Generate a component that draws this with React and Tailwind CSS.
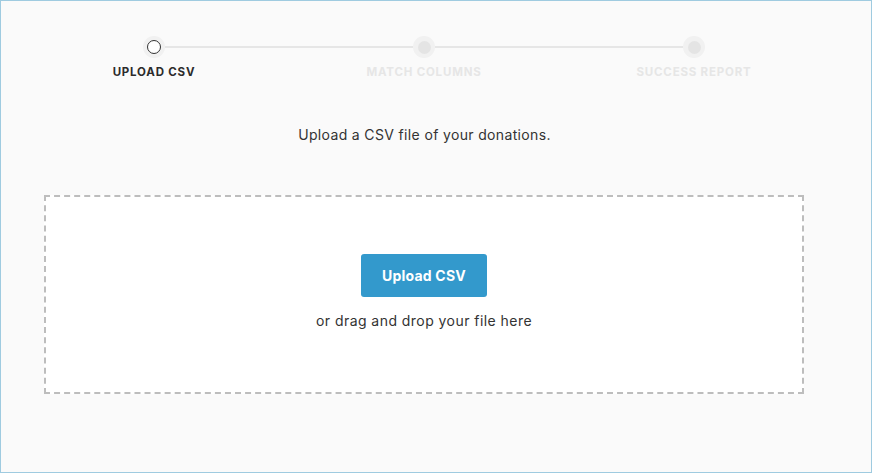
const steps = [
  { label: 'Upload CSV', active: true },
  { label: 'Match Columns', active: false },
  { label: 'Success Report', active: false },
]

function Step({ label, active, first, last }) {
  return (
    <div className="relative flex flex-col items-center">
      <div className="relative flex h-[22px] w-full items-center justify-center">
        {!first && <div className="absolute left-0 right-1/2 top-[10px] h-[2px] bg-[#e6e6e6]" />}
        {!last && <div className="absolute left-1/2 right-0 top-[10px] h-[2px] bg-[#e6e6e6]" />}
        <div className="relative z-10 grid h-[22px] w-[22px] place-items-center rounded-full bg-[#f1f1f1]">
          {active ? (
            <div className="h-[14px] w-[14px] rounded-full border border-[#333] bg-white" />
          ) : (
            <div className="h-[13px] w-[13px] rounded-full bg-[#e4e4e4]" />
          )}
        </div>
      </div>
      <p
        className={
          'mt-[9px] h-[11px] text-[11.5px] font-bold uppercase leading-[11px] tracking-[0.8px] ' +
          (active ? 'text-[#2b2b2b]' : 'text-[#e6e6e6]')
        }
      >
        {label}
      </p>
    </div>
  )
}

export default function App() {
  return (
    <div
      className="h-[473px] w-[872px] border border-[#9fcbe0] bg-[#fafafa] text-[#2b2b2b]"
      style={{ fontFamily: 'Inter, "Open Sans", sans-serif' }}
    >
      <div className="ml-[18px] mt-[35px] grid w-[810px] grid-cols-3">
        {steps.map((s, i) => (
          <Step key={s.label} {...s} first={i === 0} last={i === steps.length - 1} />
        ))}
      </div>

      <p className="mt-[50px] w-[847px] text-center text-[14px] leading-none tracking-[0.35px] text-[#333]">
        Upload a CSV file of your donations.
      </p>

      <div className="ml-[43px] mt-[53px] flex h-[199px] w-[760px] flex-col items-center border-2 border-dashed border-[#bdbdbd] bg-white pt-[57px]">
        <button className="h-[43px] w-[126px] rounded-[3px] bg-[#3399cc] text-[14px] font-bold tracking-[0.2px] text-white">
          Upload CSV
        </button>
        <p className="mt-[17px] text-[14px] leading-none tracking-[0.45px] text-[#333]">or drag and drop your file here</p>
      </div>
    </div>
  )
}
